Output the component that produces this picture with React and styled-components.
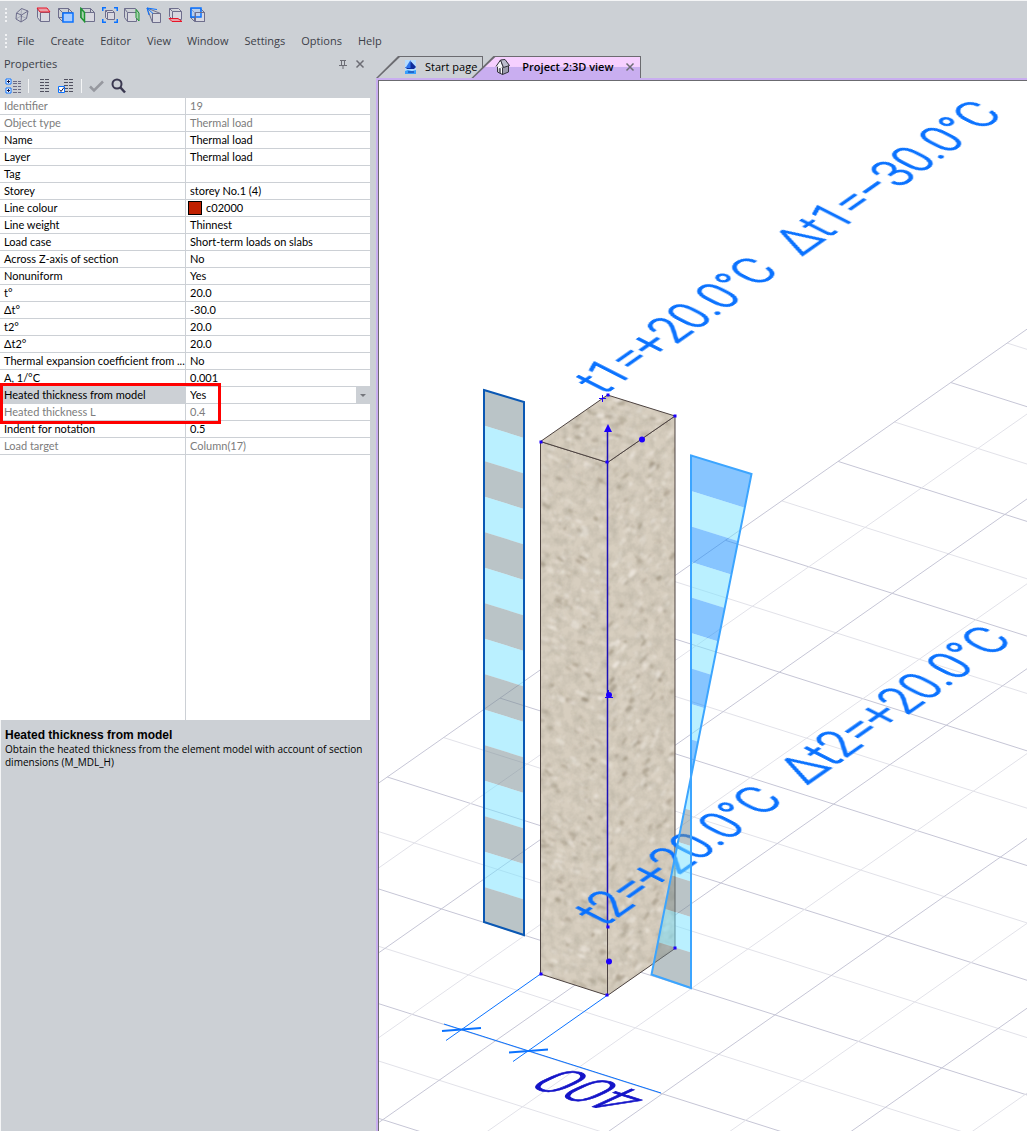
import React from "react";
import styled, { createGlobalStyle } from "styled-components";

const colors = {
  chrome: "#ccd0d5",
  text: "#3c4048",
  muted: "#7c7c7c",
  outline: "#6e6e8c",
  lilac: "#c9aef0",
  accent: "#0a72ff",
  red: "#e81428",
  green: "#1e9632",
  frame: "#6b6b70",
};

const GlobalStyle = createGlobalStyle`
  * {
    box-sizing: border-box;
  }
  body {
    margin: 0;
    background: ${colors.chrome};
    font-family: "Open Sans", "Noto Sans", sans-serif;
    color: ${colors.text};
  }
  button, select {
    font: inherit;
    color: inherit;
    border: 0;
    padding: 0;
    background: transparent;
  }
`;

const Window = styled.div`
  display: flex;
  flex-direction: column;
  min-height: 100vh;
  border-top: 1px solid #f4f5f6;
`;

const ToolBar = styled.div`
  display: flex;
  align-items: center;
  height: 28px;
  padding-left: 5px;
  gap: 7px;
`;

const Grip = styled.span`
  width: 2px;
  height: 14px;
  background: repeating-linear-gradient(#f2f3f5 0 2px, transparent 2px 4px);
`;

const IconList = styled.div`
  display: flex;
  gap: 6px;
`;

const IconButton = styled.button`
  display: flex;
  width: 16px;
  height: 16px;
`;

const MenuBar = styled.nav`
  display: flex;
  align-items: center;
  height: 24px;
  padding-left: 5px;
  gap: 10px;
`;

const MenuList = styled.div`
  display: flex;
  gap: 16px;
`;

const MenuItem = styled.button`
  font-size: 11px;
  line-height: 16px;
`;

const Workspace = styled.div`
  display: flex;
  flex: 1;
`;

const Side = styled.aside`
  display: flex;
  flex-direction: column;
  width: 370px;
  flex-shrink: 0;
`;

const SideHeader = styled.div`
  display: flex;
  align-items: center;
  height: 22px;
  padding: 0 5px 0 4px;
  gap: 7px;
`;

const SideTitle = styled.h2`
  flex: 1;
  margin: 0;
  font-size: 11px;
  font-weight: 400;
  line-height: 16px;
`;

const HeaderButton = styled.button`
  display: flex;
  width: 10px;
  height: 10px;
`;

const SideTools = styled.div`
  display: flex;
  align-items: center;
  height: 23px;
  padding: 0 0 1px 5px;
  gap: 6px;
`;

const Separator = styled.span`
  width: 1px;
  height: 14px;
  margin: 0 1px;
  background: #f4f5f6;
`;

const GridPane = styled.div`
  position: relative;
  flex: 1;
  background: linear-gradient(${colors.chrome}, ${colors.chrome}) 185px 0 / 1px 100% no-repeat #fff;
  font-family: Lato, Roboto, sans-serif;
`;

const PropertyTable = styled.table`
  width: 100%;
  table-layout: fixed;
  border-collapse: separate;
  border-spacing: 0;
  font-size: 11px;
  line-height: 16px;
`;

const Row = styled.tr`
  height: 17px;
  color: ${(props) => (props.$muted ? colors.muted : "#000")};
`;

const NameCell = styled.th`
  width: 186px;
  padding: 0 0 0 4px;
  border-right: 1px solid ${colors.chrome};
  border-bottom: 1px solid ${colors.chrome};
  background: ${(props) => (props.$selected ? colors.chrome : "transparent")};
  font-weight: 400;
  text-align: left;
  white-space: nowrap;
`;

const ValueCell = styled.td`
  padding: 0 0 0 4px;
  border-bottom: 1px solid ${colors.chrome};
`;

const ValueLine = styled.div`
  display: flex;
  align-items: center;
  height: 16px;
  gap: 4px;
`;

const Swatch = styled.span`
  width: 14px;
  height: 14px;
  margin-left: -2px;
  border: 1px solid #000;
  background: ${(props) => props.$color};
`;

const ValueSelect = styled.select`
  flex: 1;
  height: 16px;
  line-height: 16px;
  appearance: none;
`;

const SelectArrow = styled.span`
  display: flex;
  align-items: center;
  justify-content: center;
  width: 14px;
  height: 16px;
  background: ${colors.chrome};
`;

const Highlight = styled.div`
  position: absolute;
  left: 0;
  top: 285px;
  width: 221px;
  height: 41px;
  border: 3px solid #ff0000;
  pointer-events: none;
`;

const HelpPane = styled.section`
  height: 411px;
  padding: 8px 4px;
  border: solid #f4f5f6;
  border-width: 0 0 0 1px;
  color: #000;
`;

const HelpTitle = styled.h3`
  margin: 0;
  font-family: "Liberation Sans", sans-serif;
  font-size: 12px;
  line-height: 14px;
`;

const HelpText = styled.p`
  margin: 1px 0 0;
  font-size: 10px;
  line-height: 13px;
`;

const Main = styled.main`
  display: flex;
  flex-direction: column;
  flex: 1;
  min-width: 0;
  padding-left: 6px;
`;

const TabStrip = styled.div`
  display: flex;
  height: 25px;
  padding-top: 3px;
`;

const Tab = styled.div`
  position: relative;
  z-index: 0;
  display: flex;
  align-items: center;
  height: 22px;
  padding: 0 6px 0 ${(props) => (props.$active ? "24px" : "28px")};
  margin-left: ${(props) => (props.$active ? "-12px" : "0")};
  gap: 12px;

  &::before,
  &::after {
    content: "";
    position: absolute;
    z-index: -1;
    inset: 0;
    clip-path: polygon(0 100%, 22px 0, 100% 0, 100% 100%);
    background: ${colors.frame};
  }
  &::after {
    inset: 1px 1px 0 2px;
    background: ${(props) =>
      props.$active
        ? "linear-gradient(#f6d0ff 0 45%, #c9aef0 50%)"
        : colors.chrome};
  }
`;

const TabButton = styled.button`
  display: flex;
  align-items: center;
  gap: ${(props) => (props.$active ? "11px" : "8px")};
  color: #000;
  font-size: 11px;
  font-weight: ${(props) => (props.$active ? 600 : 400)};
  line-height: 16px;
  white-space: nowrap;
`;

const Viewport = styled.div`
  position: relative;
  flex: 1;
  border: solid ${colors.lilac};
  border-width: 2px 0 0 2px;
  background: #fff;
  overflow: hidden;
`;

const Scene = styled.svg`
  position: absolute;
  inset: 0;
  width: 100%;
  height: 100%;
  border: solid ${colors.frame};
  border-width: 1px 0 0 1px;
`;

const properties = [
  { name: "Identifier", value: "19", muted: true },
  { name: "Object type", value: "Thermal load", muted: true },
  { name: "Name", value: "Thermal load" },
  { name: "Layer", value: "Thermal load" },
  { name: "Tag", value: "" },
  { name: "Storey", value: "storey No.1 (4)" },
  { name: "Line colour", value: "c02000", swatch: "#c02000" },
  { name: "Line weight", value: "Thinnest" },
  { name: "Load case", value: "Short-term loads on slabs" },
  { name: "Across Z-axis of section", value: "No" },
  { name: "Nonuniform", value: "Yes" },
  { name: "t°", value: "20.0" },
  { name: "Δt°", value: "-30.0" },
  { name: "t2°", value: "20.0" },
  { name: "Δt2°", value: "20.0" },
  { name: "Thermal expansion coefficient from ...", value: "No" },
  { name: "A, 1/°C", value: "0.001" },
  { name: "Heated thickness from model", value: "Yes", selected: true },
  { name: "Heated thickness L", value: "0.4", muted: true },
  { name: "Indent for notation", value: "0.5" },
  { name: "Load target", value: "Column(17)", muted: true },
];

const menu = ["File", "Create", "Editor", "View", "Window", "Settings", "Options", "Help"];

/* Toolbar icons: wireframe cubes with one face picked out */

const Cube = ({ children }) => (
  <svg width="16" height="16" fill="none" stroke={colors.outline}>
    <path d="M.5 1.5h10l4 4M.5 1.5v9l4 4M10.5 1.5v4M.5 10.5h4" />
    <path d="M4.5 5.5h10v9h-10zM.5 1.5l4 4" fill="#d8d8e0" />
    {children}
  </svg>
);

const viewIcons = [
  {
    label: "Axonometric view",
    icon: (
      <svg width="16" height="16" fill="none" stroke={colors.outline}>
        <path d="M2.5 6l5-4.5 6.5 2.500-1.500 7.500-5.500 3.500-5-3zM2.500 6l5 2 6.500-4M7.500 8l-.5 7" />
        <path d="M7.500 1.500L7 9l-5 3M7 9l6 2.500" strokeOpacity=".4" />
      </svg>
    ),
  },
  {
    label: "Top view",
    icon: (
      <svg width="16" height="16" fill="none" stroke={colors.outline}>
        <path d="M1.500 1.500v9l3 4M4.500 5.500h9v9h-9z" fill="#d8d8e0" />
        <path d="M1 1h10l3 4H4z" fill="#e8a0a8" stroke={colors.red} />
      </svg>
    ),
  },
  {
    label: "Front view",
    icon: (
      <Cube>
        <path d="M5 6h10v9H5z" fill="#a8ccff" stroke={colors.accent} strokeWidth="1.5" />
      </Cube>
    ),
  },
  {
    label: "Left view",
    icon: (
      <Cube>
        <path d="M1 1.500l3.500 4v9l-3.500-4z" fill="#a8d0b0" stroke={colors.green} strokeWidth="1.5" />
      </Cube>
    ),
  },
  {
    label: "Fit view",
    icon: (
      <svg width="16" height="16" fill="none" stroke={colors.outline}>
        <path d="M3.500 3.500h7l2 2v7h-7l-2-2zM5.500 5.500h7M5.500 5.500v7M3.500 3.500l2 2" fill="#d8d8e0" />
        <path d="M.75 4V.75H4M12 .75h3.250V4M15.250 12v3.250H12M4 15.250H.75V12" stroke={colors.accent} strokeWidth="1.5" />
      </svg>
    ),
  },
  {
    label: "Right view",
    icon: (
      <svg width="16" height="16" fill="none" stroke={colors.outline}>
        <path d="M.5 1.500h11l3 4M.5 1.500v9l3 4M.5 1.500l3 4" />
        <path d="M3.500 5.500h9v9h-9z" fill="#d8d8e0" />
        <path d="M12 2.500l3 3.500v8l-3-3.500z" fill="#a8d0b0" stroke={colors.green} />
      </svg>
    ),
  },
  {
    label: "Perspective view",
    icon: (
      <svg width="16" height="16" fill="none" stroke={colors.outline}>
        <path d="M6.500 6.500h8v9h-8z" fill="#d8d8e0" />
        <path d="M1 1l5.500 14.500M1 1l13.500 5.500" />
        <path d="M1 1l10 1.500M1 1l2 7M1 1l6 5.500" stroke={colors.accent} />
      </svg>
    ),
  },
  {
    label: "Bottom view",
    icon: (
      <svg width="16" height="16" fill="none" stroke={colors.outline}>
        <path d="M1.500 1.500h9l3 3v8h-9l-3-3zM1.500 1.500l3 3h9M4.500 4.500v8" fill="#d8d8e0" />
        <path d="M1 11.500h9l4 3H4z" fill="#e8a0a8" stroke={colors.red} />
      </svg>
    ),
  },
  {
    label: "Back view",
    icon: (
      <Cube>
        <path d="M1 1h10v9H1z" fill="#a8ccff" fillOpacity=".5" stroke={colors.accent} strokeWidth="1.5" />
        <path d="M5.500 5.500h9v9h-9z" />
      </Cube>
    ),
  },
];

const DashLines = ({ x }) => (
  <g stroke="#50505f">
    {[1.5, 4.5, 7.5, 10.5, 13.5].map((y) => (
      <path key={y} d={`M${x} ${y}h4m1 0h4`} />
    ))}
  </g>
);

const CategorizeIcon = () => (
  <svg width="17" height="16" fill="none">
    <path d="M1 1h5v5H1zM1 10h5v5H1z" fill="#fff" stroke={colors.accent} />
    <path d="M2 3.500h3M3.500 2v3M2 12.500h3M3.500 11v3" stroke="#101040" />
    <path d="M8 3.500h4m1 0h4M8 5.500h4m1 0h4M8 11.500h4m1 0h4M8 14.500h4m1 0h4M8 8.500h4m1 0h4" stroke="#6c6c84" />
  </svg>
);

const ColumnsIcon = () => (
  <svg width="16" height="16" fill="none">
    <DashLines x={4} />
  </svg>
);

const CheckedIcon = () => (
  <svg width="16" height="16" fill="none">
    <DashLines x={6} />
    <path d="M.5 8.500h6v6h-6z" fill="#fff" stroke={colors.accent} />
    <path d="M1.500 11.500l1.500 2 3-4" stroke="#101040" />
  </svg>
);

const ApplyIcon = () => (
  <svg width="16" height="16" fill="none">
    <path d="M1 8.500l4 4 9-9" stroke="#96989f" strokeWidth="2.5" />
  </svg>
);

const SearchIcon = () => (
  <svg width="16" height="16" fill="none" stroke="#3a3850">
    <circle cx="6" cy="6" r="4.5" strokeWidth="2" />
    <path d="M9 9l5 5.500" strokeWidth="2.5" />
  </svg>
);

const StartIcon = () => (
  <svg width="13" height="16">
    <path d="M1 1h11v14H1z" fill="#b4dcff" />
    <path d="M6.500 2l5.500 6-2 2H3L1 8h4z" fill="#0c2c9c" />
    <path d="M6.500 1v8h-5z" fill="#2c74ec" />
    <path d="M1 12l3-1 4 1 4-1v4H1z" fill="#38a0fc" />
    <path d="M4 13h6" stroke="#0c2c9c" />
  </svg>
);

const HouseIcon = () => (
  <svg width="16" height="16" stroke="#33333c" strokeLinejoin="round">
    <path d="M2.500 7v6l5 2.500V8z" fill="#fff" />
    <path d="M7.500 8v7.500l6-2.500V6.500L11 2.500z" fill="#9c9cac" />
    <path d="M1 7.500L5.500 1 8.500 8.500" fill="#f4f4f8" />
    <path d="M5.500 1L10 .5l4.500 6-6 2z" fill="#bcbccc" />
    <path d="M4 9.500h1.500V14L4 13.500z" fill="#7c7c8c" strokeWidth=".5" />
  </svg>
);

const CloseIcon = () => (
  <svg width="10" height="10" fill="none" stroke="#6c6c74" strokeWidth="1.5">
    <path d="M1.500 1.500l7 7M8.500 1.500l-7 7" />
  </svg>
);

const PinIcon = () => (
  <svg width="10" height="10" fill="none" stroke="#6c6c74">
    <path d="M3.500 1v5M2 1.500h6M6.500 1v5M1 6.500h8M5 6v4" />
  </svg>
);

/* Model space: floor grid, column, load diagrams */

const gridPoint = (i, j) => [
  387.3 + i * 112.7 + j * 166.8,
  777 - i * 78.9 + j * 53,
];

const gridLine = (from, to) => `M${from.join(" ")}L${to.join(" ")}`;

const steps = (from, to) => {
  const result = [];
  for (let n = from; n <= to; n += 0.5) result.push(n);
  return result;
};

const isMajor = (n) => Number.isInteger(n);
const sortMinorFirst = (a, b) => isMajor(a) - isMajor(b);

const FloorGrid = () => (
  <g fill="none">
    {steps(-9, 6).sort(sortMinorFirst).map((i) => (
      <path
        key={`i${i}`}
        d={gridLine(gridPoint(i, 0), gridPoint(i, 10))}
        stroke={isMajor(i) ? "#c6c6d6" : "#e2e2e9"}
      />
    ))}
    {steps(0, 8).sort(sortMinorFirst).map((j) => (
      <path
        key={`j${j}`}
        d={gridLine(gridPoint(-9, j), gridPoint(6, j))}
        stroke={isMajor(j) ? "#c6c6d6" : "#e2e2e9"}
      />
    ))}
  </g>
);

const makeSpecks = (seed, count, box, angle) => {
  let state = seed;
  const next = () => {
    state = (state * 1103515245 + 12345) % 2147483648;
    return state / 2147483648;
  };
  return Array.from({ length: count }, () => ({
    x: box.x + next() * box.w,
    y: box.y + next() * box.h,
    rx: 1 + next() * 4,
    ry: 0.6 + next() * 1.9,
    light: next() > 0.4,
    opacity: 0.1 + next() * 0.4,
    angle: angle + next() * 20,
  }));
};

const faces = [
  {
    id: "left",
    d: "M540.500 441.500L607.500 462.500V995.500L540.500 974Z",
    specks: makeSpecks(7, 560, { x: 540, y: 441, w: 68, h: 555 }, 15),
  },
  {
    id: "right",
    d: "M607.500 462.500L675 416V948.500L607.500 995.500Z",
    specks: makeSpecks(29, 620, { x: 607, y: 416, w: 68, h: 580 }, -60),
  },
  {
    id: "top",
    d: "M540.500 441.500L607.500 395L675 416L607.500 462.500Z",
    specks: makeSpecks(83, 190, { x: 540, y: 395, w: 136, h: 68 }, -10),
  },
];

const Column = () => (
  <g>
    <defs>
      <filter id="grain" x="0" y="0" width="100%" height="100%">
        <feTurbulence type="fractalNoise" baseFrequency="0.11" numOctaves="3" seed="4" />
        <feColorMatrix values="0 0 0 0 .5  0 0 0 0 .46  0 0 0 0 .38  1.3 0 0 0 -.44" />
        <feComposite in2="SourceGraphic" operator="in" />
      </filter>
      <filter id="soften">
        <feGaussianBlur stdDeviation=".9" />
      </filter>
    </defs>
    {faces.map((face) => (
      <g key={face.id}>
        <clipPath id={`face-${face.id}`}>
          <path d={face.d} />
        </clipPath>
        <path d={face.d} fill="#d7cebf" />
        <path d={face.d} filter="url(#grain)" />
        <g clipPath={`url(#face-${face.id})`}>
          <g filter="url(#soften)">
            {face.specks.map((s, index) => (
              <ellipse
                key={index}
                rx={s.rx}
                ry={s.ry}
                fill={s.light ? "#f4efe8" : "#8c806c"}
                opacity={s.opacity}
                transform={`translate(${s.x} ${s.y}) rotate(${s.angle})`}
              />
            ))}
          </g>
        </g>
        <path d={face.d} fill="none" stroke="#4c4240" />
      </g>
    ))}
    <path d="M607.500 430V928" stroke="#1c10b8" strokeWidth="1.5" />
  </g>
);

const bands = Array.from({ length: 15 }, (_, index) => index);
const BAND = 35.5;

const bandPath = (x1, x2, y) => {
  const drop = (x2 - x1) * 0.31;
  return `M${x1} ${y}L${x2} ${y + drop}v${BAND}L${x1} ${y + BAND}Z`;
};

const LoadDiagrams = () => (
  <g>
    <clipPath id="twist">
      <path d="M691 455.500L751.500 474L651.500 974.500L691 988Z" />
    </clipPath>
    <g fillOpacity=".5">
      {bands.map((n) => (
        <path
          key={n}
          d={bandPath(484, 524, 390 + n * BAND)}
          fill={n % 2 ? "#75e1ff" : "#75898f"}
        />
      ))}
      <g clipPath="url(#twist)">
        {bands.map((n) => (
          <path
            key={n}
            d={bandPath(641, 761, 440 + n * BAND)}
            fill={n % 2 ? "#75e1ff" : n < 9 ? "#0f8bff" : "#75898f"}
          />
        ))}
      </g>
    </g>
    <path d="M484 390L524 402V935L484 922Z" fill="none" stroke="#0a58b4" strokeWidth="2" />
    <path d="M691 455.500L751.500 474L651.500 974.500L691 988Z" fill="none" stroke="#3ca5ff" strokeWidth="2" />
  </g>
);

const Dimension = () => (
  <g fill="none" stroke={colors.accent}>
    <path d="M540.500 974L446 1040.500M607 995.500L513 1061.500M444 1024L661 1093" />
    <path d="M442 1031L481 1028M509 1052.500L548 1049.500" strokeWidth="2" />
  </g>
);

const corners = [
  [541, 442], [607, 462], [675, 416], [608, 395], [608, 927],
  [541, 974], [607, 995], [675, 948],
];

const handles = [[642, 439.5], [609, 695], [609, 961.5]];

const Handles = () => (
  <g fill="#1c00ff">
    {corners.map(([x, y]) => (
      <rect key={`${x}-${y}`} x={x - 1.5} y={y - 1.5} width="3" height="3" />
    ))}
    {handles.map(([x, y]) => (
      <circle key={`${x}-${y}`} cx={x} cy={y} r="3" />
    ))}
    <path d="M608 424l4 8h-8z" />
    <path d="M602.500 395v7M599 398.500h7M605 697.500h8M608.500 690v4" stroke="#1c00ff" />
  </g>
);

/* Notes lie in the model planes, along the grid axes */
const SceneText = styled.text`
  font-family: Roboto, sans-serif;
  font-size: ${(props) => props.$size}px;
  font-weight: 300;
  fill: ${(props) => props.$color};
  stroke: ${(props) => props.$color};
  stroke-width: 1px;
`;

const Note = ({ x, y, size, first, second }) => (
  <g transform={`matrix(.819 -.573 1.060 .540 ${x} ${y})`}>
    <SceneText $size={size} $color={colors.accent}>{first}</SceneText>
    <SceneText x={size * 5.5} $size={size} $color={colors.accent}>{second}</SceneText>
  </g>
);

const ModelView = () => (
  <Scene viewBox="379 81 648 1050" preserveAspectRatio="xMinYMin slice">
    <FloorGrid />
    <Column />
    <Note x={603} y={395} size={44} first="t1=+20.0°C" second="Δt1=−30.0°C" />
    <Note x={604} y={927} size={45} first="t2=+20.0°C" second="Δt2=+20.0°C" />
    <LoadDiagrams />
    <Dimension />
    <g transform="matrix(-.953 -.303 .980 -.450 654 1096)">
      <SceneText $size={56} $color="#1414c8">400</SceneText>
    </g>
    <Handles />
  </Scene>
);

const PropertyValue = ({ property }) => {
  if (property.selected) {
    return (
      <ValueLine>
        <ValueSelect aria-label={property.name} defaultValue={property.value}>
          <option>Yes</option>
          <option>No</option>
        </ValueSelect>
        <SelectArrow>
          <svg width="6" height="3">
            <path d="M0 0h6l-3 3z" fill="#74767c" />
          </svg>
        </SelectArrow>
      </ValueLine>
    );
  }
  return (
    <ValueLine>
      {property.swatch && <Swatch $color={property.swatch} />}
      {property.value}
    </ValueLine>
  );
};

const PropertiesPanel = () => (
  <Side>
    <SideHeader>
      <SideTitle>Properties</SideTitle>
      <HeaderButton aria-label="Pin panel">
        <PinIcon />
      </HeaderButton>
      <HeaderButton aria-label="Close panel">
        <CloseIcon />
      </HeaderButton>
    </SideHeader>
    <SideTools>
      <IconButton aria-label="Categorize">
        <CategorizeIcon />
      </IconButton>
      <Separator />
      <IconButton aria-label="Columns">
        <ColumnsIcon />
      </IconButton>
      <IconButton aria-label="Show checked">
        <CheckedIcon />
      </IconButton>
      <Separator />
      <IconButton aria-label="Apply">
        <ApplyIcon />
      </IconButton>
      <IconButton aria-label="Search">
        <SearchIcon />
      </IconButton>
    </SideTools>
    <GridPane>
      <PropertyTable>
        <tbody>
          {properties.map((property) => (
            <Row key={property.name} $muted={property.muted}>
              <NameCell scope="row" $selected={property.selected}>
                {property.name}
              </NameCell>
              <ValueCell>
                <PropertyValue property={property} />
              </ValueCell>
            </Row>
          ))}
        </tbody>
      </PropertyTable>
      <Highlight />
    </GridPane>
    <HelpPane>
      <HelpTitle>Heated thickness from model</HelpTitle>
      <HelpText>
        Obtain the heated thickness from the element model with account of
        section dimensions (M_MDL_H)
      </HelpText>
    </HelpPane>
  </Side>
);

const App = () => {
  return (
    <Window>
      <GlobalStyle />
      <ToolBar>
        <Grip />
        <IconList>
          {viewIcons.map(({ label, icon }) => (
            <IconButton key={label} aria-label={label}>
              {icon}
            </IconButton>
          ))}
        </IconList>
      </ToolBar>
      <MenuBar>
        <Grip />
        <MenuList>
          {menu.map((item) => (
            <MenuItem key={item}>{item}</MenuItem>
          ))}
        </MenuList>
      </MenuBar>
      <Workspace>
        <PropertiesPanel />
        <Main>
          <TabStrip>
            <Tab>
              <TabButton>
                <StartIcon />
                Start page
              </TabButton>
            </Tab>
            <Tab $active>
              <TabButton $active>
                <HouseIcon />
                Project 2:3D view
              </TabButton>
              <HeaderButton aria-label="Close tab">
                <CloseIcon />
              </HeaderButton>
            </Tab>
          </TabStrip>
          <Viewport>
            <ModelView />
          </Viewport>
        </Main>
      </Workspace>
    </Window>
  );
};

export default App;
